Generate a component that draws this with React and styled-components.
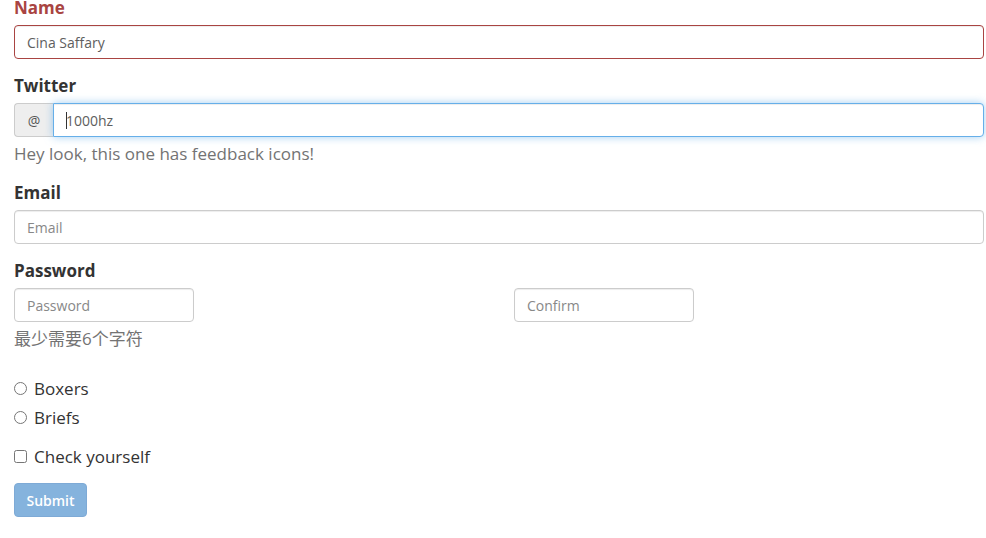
import React from 'react';
import styled, { createGlobalStyle } from 'styled-components';

const GlobalStyle = createGlobalStyle`
    html, body {
        margin: 0;
        padding: 0;
        background: #fff;
    }
    body {
        font-family: "Open Sans", "Noto Sans CJK SC", sans-serif;
        color: #333;
    }
`;

const Form = styled.form`
    margin-top: -4px;
    padding: 0 2px 0 14px;
`;

const Group = styled.div`
    margin-bottom: ${p => p.$gap || 15}px;
`;

const Label = styled.label`
    display: block;
    font-size: 17px;
    font-weight: 700;
    line-height: 24px;
    margin-bottom: 5px;
    color: ${p => (p.$error ? '#a94442' : '#333')};
`;

const Input = styled.input`
    box-sizing: border-box;
    display: block;
    width: ${p => p.$width || '100%'};
    height: 34px;
    padding: 6px 12px;
    font-family: "Open Sans", sans-serif;
    font-size: 14px;
    color: #5e5e5e;
    background: #fff;
    border: 1px solid ${p => (p.$error ? '#a94442' : p.$focus ? '#66afe9' : '#ccc')};
    border-radius: ${p => p.$radius || '4px'};
    box-shadow: ${p => p.$focus
        ? 'inset 0 1px 1px rgba(0,0,0,.075), 0 0 8px rgba(102,175,233,.6)'
        : 'inset 0 1px 1px rgba(0,0,0,.075)'};
    outline: none;
    &::placeholder {
        color: #888;
    }
`;

const InputGroup = styled.div`
    display: flex;
`;

const Addon = styled.span`
    box-sizing: border-box;
    width: 39px;
    height: 34px;
    display: flex;
    align-items: center;
    justify-content: center;
    font-size: 14px;
    color: #555;
    background: #eee;
    border: 1px solid #ccc;
    border-right: none;
    border-radius: 4px 0 0 4px;
`;

const CaretWrap = styled.span`
    position: relative;
    flex: 1;
    &::after {
        content: '';
        position: absolute;
        left: 13px;
        top: 9px;
        width: 1px;
        height: 17px;
        background: #333;
    }
`;

const Help = styled.div`
    margin-top: 5px;
    font-size: 17px;
    line-height: 24px;
    color: #737373;
`;

const Columns = styled.div`
    display: grid;
    grid-template-columns: 500px 1fr;
`;

const Choice = styled.label`
    display: flex;
    align-items: center;
    height: 24px;
    margin-bottom: ${p => p.$gap || 0}px;
    font-size: 17px;
    color: #333;
    input {
        margin: 0 7px 0 0;
        width: 13px;
        height: 13px;
    }
`;

const Submit = styled.button`
    box-sizing: border-box;
    width: 73px;
    height: 34px;
    padding: 0;
    font-family: "Open Sans", sans-serif;
    font-size: 14px;
    font-weight: 600;
    color: #fff;
    background: #85b3dd;
    border: 1px solid #7eaad6;
    border-radius: 4px;
`;

const App = () => {
    return (
        <>
            <GlobalStyle />
            <Form onSubmit={e => e.preventDefault()}>
                <Group>
                    <Label $error>Name</Label>
                    <Input $error defaultValue="Cina Saffary" />
                </Group>

                <Group>
                    <Label>Twitter</Label>
                    <InputGroup>
                        <Addon>@</Addon>
                        <CaretWrap>
                            <Input $focus $radius="0 4px 4px 0" defaultValue="1000hz" />
                        </CaretWrap>
                    </InputGroup>
                    <Help>Hey look, this one has feedback icons!</Help>
                </Group>

                <Group>
                    <Label>Email</Label>
                    <Input type="email" placeholder="Email" />
                </Group>

                <Group $gap={25}>
                    <Label>Password</Label>
                    <Columns>
                        <Input type="password" placeholder="Password" $width="180px" />
                        <Input type="password" placeholder="Confirm" $width="180px" />
                    </Columns>
                    <Help>最少需要6个字符</Help>
                </Group>

                <Group>
                    <Choice $gap={5}>
                        <input type="radio" name="underwear" />
                        Boxers
                    </Choice>
                    <Choice>
                        <input type="radio" name="underwear" />
                        Briefs
                    </Choice>
                </Group>

                <Group>
                    <Choice>
                        <input type="checkbox" />
                        Check yourself
                    </Choice>
                </Group>

                <Submit type="submit" disabled>Submit</Submit>
            </Form>
        </>
    );
};

export default App;
